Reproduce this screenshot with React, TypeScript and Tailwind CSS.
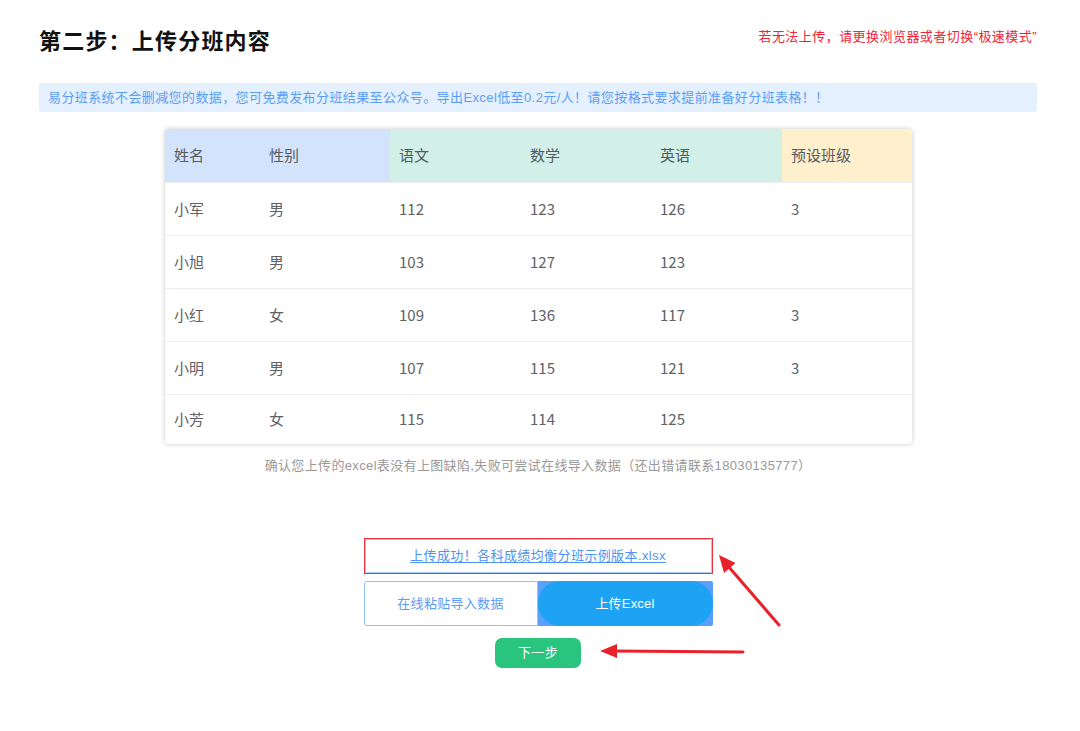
import React from "react";

const cols = ["姓名", "性别", "语文", "数学", "英语", "预设班级"];
const headerBg = [
  "bg-[#d4e3fc]",
  "bg-[#d4e3fc]",
  "bg-[#d2f0e7]",
  "bg-[#d2f0e7]",
  "bg-[#d2f0e7]",
  "bg-[#fff0cd]",
];
const rows = [
  ["小军", "男", "112", "123", "126", "3"],
  ["小旭", "男", "103", "127", "123", ""],
  ["小红", "女", "109", "136", "117", "3"],
  ["小明", "男", "107", "115", "121", "3"],
  ["小芳", "女", "115", "114", "125", ""],
];

export default function App() {
  return (
    <div className="relative w-[1080px] h-[731px] bg-white font-['Liberation_Sans','Noto_Sans_CJK_SC',sans-serif] overflow-hidden">
      <div className="mx-[39px] w-[998px] pt-[24px]">
        <div className="flex justify-between items-start">
          <h1 className="text-[22px] leading-[30px] font-bold text-[#111] tracking-[1.2px] font-['Noto_Sans_CJK_SC',sans-serif]">
            第二步：上传分班内容
          </h1>
          <div className="mt-[4px] text-[13px] leading-[18px] text-[#f0243a] tracking-[0.45px]">
            若无法上传，请更换浏览器或者切换“极速模式”
          </div>
        </div>

        <div className="mt-[29px] h-[29px] rounded-[3px] bg-[#e4f0fe] pl-[9px] flex items-center text-[13px] text-[#5b9df5] tracking-[0.4px]">
          易分班系统不会删减您的数据，您可免费发布分班结果至公众号。导出Excel低至0.2元/人！请您按格式要求提前准备好分班表格！！
        </div>

        <div className="ml-[126px] mt-[17px] w-[747px] rounded-[4px] bg-white shadow-[0_0_5px_rgba(0,0,0,0.22)] overflow-hidden font-['Noto_Sans_CJK_SC',sans-serif]">
          <div className="grid grid-cols-[95px_130px_131px_130px_131px_130px] h-[53px]">
            {cols.map((c, i) => (
              <div
                key={c}
                className={`${headerBg[i]} flex items-center pl-[9px] text-[15px] text-[#555a60]`}
              >
                {c}
              </div>
            ))}
          </div>
          {rows.map((r, ri) => (
            <div
              key={ri}
              className={`grid grid-cols-[95px_130px_131px_130px_131px_130px] ${ri === rows.length - 1 ? "h-[50px]" : "h-[53px]"} border-t border-[#ebeef5]`}
            >
              {r.map((v, ci) => (
                <div key={ci} className="flex items-center pl-[9px] text-[15px] text-[#606266]">
                  {v}
                </div>
              ))}
            </div>
          ))}
        </div>

        <div className="mt-[13px] text-center text-[13px] leading-[18px] text-[#999] tracking-[0.35px]">
          确认您上传的excel表没有上图缺陷,失败可尝试在线导入数据（还出错请联系18030135777）
        </div>

        <div className="mt-[63px] flex flex-col items-center">
          <div className="w-[349px] h-[36px] border-[1.5px] border-[#ea3344] shadow-[inset_0_0_0_1px_#a9c9fb] flex items-center justify-center">
            <span className="text-[13px] text-[#4c93f2] underline underline-offset-2 tracking-[0.4px]">
              上传成功！各科成绩均衡分班示例版本.xlsx
            </span>
          </div>

          <div className="mt-[7px] w-[349px] h-[45px] flex">
            <div className="w-[174px] h-full rounded-l-[3px] border border-[#93c2fb] bg-white flex items-center justify-center text-[13px] text-[#5c9cf5] tracking-[0.3px]">
              在线粘贴导入数据
            </div>
            <div className="flex-1 h-full rounded-r-[2px] bg-[#5aa0fa]">
              <div className="h-full w-full rounded-full bg-[#1ea2f3] flex items-center justify-center text-[13px] text-white tracking-[0.2px]">
                上传Excel
              </div>
            </div>
          </div>

          <button className="mt-[12px] w-[86px] h-[30px] rounded-[7px] bg-[#29c47e] text-white text-[13px] tracking-[0.3px]">
            下一步
          </button>
        </div>
      </div>

      <svg
        className="absolute left-0 top-0 pointer-events-none"
        width="1080"
        height="731"
        viewBox="0 0 1080 731"
      >
        <line x1="779" y1="625" x2="728" y2="566" stroke="#e8222a" strokeWidth="3" strokeLinecap="round" />
        <polygon points="719,555 735.5,563 724,573" fill="#e8222a" />
        <line x1="743" y1="652" x2="612" y2="651" stroke="#e8222a" strokeWidth="3" strokeLinecap="round" />
        <polygon points="600,651 617,644 617,658" fill="#e8222a" />
      </svg>
    </div>
  );
}
